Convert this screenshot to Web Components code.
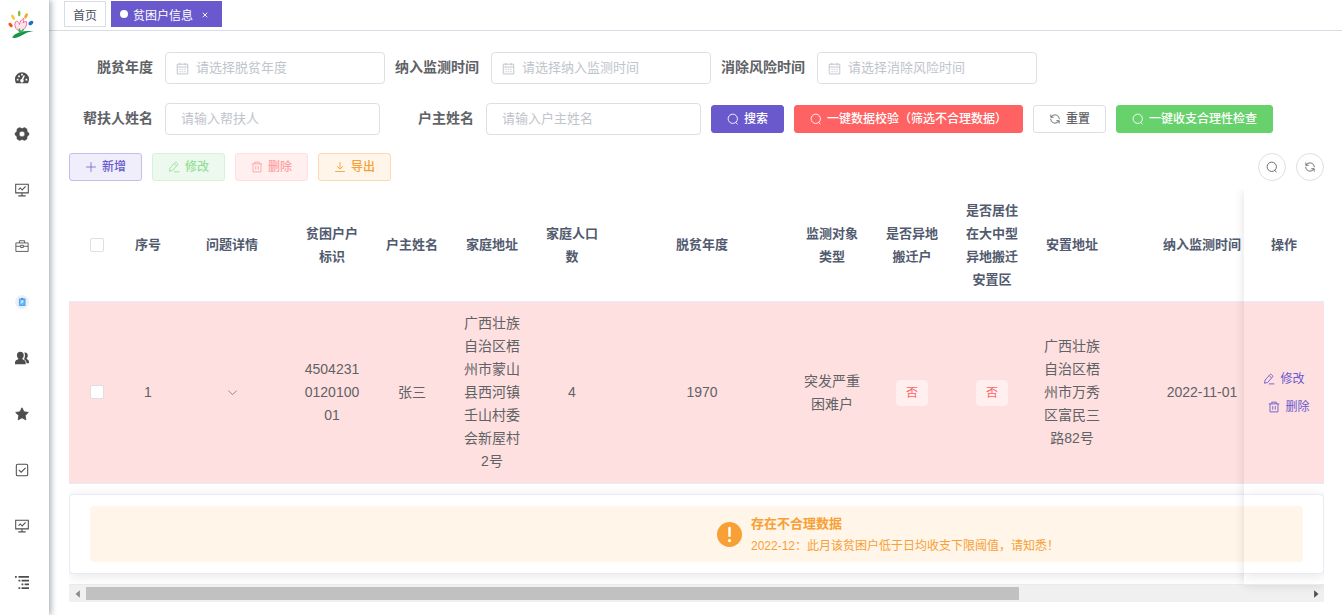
<!DOCTYPE html>
<html lang="zh-CN">
<head>
<meta charset="utf-8">
<title>贫困户信息</title>
<style>
  body {
    margin: 0;
    font-family: "Liberation Sans", "Noto Sans CJK SC", sans-serif;
    font-size: 14px;
    color: #606266;
    background: #fff;
    --primary: #6959cd;
    --danger: #ff6262;
    --success: #67d16b;
    --warning: #f8a035;
    --line: #dcdfe6;
    --line-soft: #e6ebf5;
  }
</style>
</head>
<body>
<app-page></app-page>

<script>
const ICONS = {
  search: '<circle cx="7.700" cy="7.700" r="6.200" stroke-width="1.200"/><path d="M11.600 12.600l2.400 2.200" stroke-width="1.300"/>',
  refresh: '<g stroke-width="1.200"><path d="M2.500 2v3.700h3.700M13.500 14v-3.700H9.800"/><path d="M5.300 3.200A5.700 5.700 0 0 1 13.700 8.300M10.700 12.800A5.700 5.700 0 0 1 2.300 7.700M2.800 5.500A6 6 0 0 1 5.300 3.200M13.200 10.500a6 6 0 0 1-2.500 2.300"/></g>',
  plus: '<path d="M8 1.500v13M1.500 8h13"/>',
  edit: '<path stroke-width="1.200" d="M2 13.700l.7-4.200 6.600-7.400q1-.9 2 0l1.300 1.200q.9 1 0 2L6.200 12.600 2 13.700zM7.800 14.500H15M8.300 3.600l3 2.800"/>',
  trash: '<path stroke-width="1.200" d="M1 3.800h14M5 3.600V1.500h6v2.100M2.700 4v10.500h10.600V4M6.300 6.800v4.700M9.700 6.800v4.700"/>',
  download: '<path stroke-width="1.200" d="M8 1.500v9M4.200 7L8 10.700 11.800 7M1.500 14h13"/>',
  calendar: '<path stroke-width="1.200" d="M1.500 2.700h13v12h-13zM1.500 6.200h13M4.700 1v3M11.300 1v3"/><path d="M4 9h2M7 9h2M10 9h2M4 12h2M7 12h2M10 12h2"/>',
  down: '<path stroke-width="1.300" d="M2 5.200l6 6 6-6"/>',
  dashboard: '<path fill="currentColor" stroke="none" fill-rule="evenodd" d="M8 1.500a8 8 0 0 0-8 8c0 1.700.4 3.200 1.100 4.500h13.800c.7-1.300 1.100-2.800 1.100-4.500a8 8 0 0 0-8-8zM7 3.200h2v2H7zM3.600 5h2v2h-2zM2 8.800h2v2H2zM12 8.800h2v2h-2zM9.800 4.800l1.600.6-2 4.300a2 2 0 1 1-1.800-.6z"/>',
  gear: '<path fill="currentColor" stroke="currentColor" stroke-width=".6" stroke-linejoin="round" fill-rule="evenodd" d="M5 .7l3 1.100L11 .7l2.600 1.500.3 3L16 7.100v1.800l-2.100 1.900-.3 3L11 15.300l-3-1.100-3 1.100-2.600-1.500-.3-3L0 8.900V7.100l2.100-1.900.3-3zM8 4.800a3.200 3.200 0 1 0 0 6.400 3.200 3.200 0 0 0 0-6.400z"/>',
  monitor: '<path stroke-width="1.200" d="M.8 1.500h14.400v9.800H.8zM8 11.300v3.200M3.800 14.700h8.400M4 7.500l2-1.800L8.200 8 12 3.800"/>',
  toolbox: '<path d="M1 4.500h14v9.700H1zM5 4.500V2h6v2.500M1 8.300h5.500M9.500 8.300H15M6.500 7.200h3v2.600h-3z"/>',
  user: '<circle cx="8" cy="8" r="8" fill="#eef0f8" stroke="none"/><path d="M5 4.500h6.500V12H5z" fill="#6ab8f7" stroke="#3f9ff0"/><path d="M7 3.300h2.500v1.800H7z" fill="#3f8fd8" stroke="none"/><path d="M6.500 7h3M6.500 9.500l3-2" stroke="#fff"/>',
  peoples: '<path fill="currentColor" stroke="none" d="M6 .8c2.500 0 4 1.700 4 4 0 1.700-.7 2.900-1.500 3.600v1c1.500.6 3.700 1.500 3.700 3.400V15H0v-2.200c0-1.900 2.200-2.800 3.700-3.400v-1C2.900 7.700 2.200 6.500 2.200 4.800c0-2.300 1.500-4 3.800-4z"/><path fill="currentColor" stroke="none" d="M10.700 1.800c2.300-.3 3.900 1.100 3.900 3.300 0 1.500-.6 2.600-1.200 3.200v.9c1.200.6 2.600 1.400 2.600 3.300V14h-2.800c0-2.400-1.200-3.800-2.900-4.600.8-1.300 1.800-4.900.4-7.600z"/>',
  star: '<path fill="currentColor" stroke="currentColor" stroke-linejoin="round" d="M8 .9l2.200 4.600 5 .7-3.600 3.500.8 5L8 12.300l-4.400 2.400.8-5L.8 6.200l5-.7z"/>',
  check: '<g stroke-width="1.200"><rect x="1.500" y="1.500" width="13" height="13" rx="1.500"/><path d="M4.300 7.800l2.800 2.700 5-5"/></g>',
  tree: '<g fill="currentColor" stroke="none"><path d="M0 1h2v2H0zM4 1h12v2H4zM4 5.300h2v2H4zM7.500 5.300H16v2H7.500zM7.500 9.700h2v2h-2zM11 9.700h5v2h-5zM4 14h2v2H4zM7.500 14H16v2H7.500z"/></g>',
  warn: '<circle cx="8" cy="8" r="8" fill="currentColor" stroke="none"/><path d="M8 3.800v5" stroke="#fff" stroke-width="1.600" stroke-linecap="round"/><circle cx="8" cy="11.900" r="1" fill="#fff" stroke="none"/>',
  close: '<path d="M2 2l12 12M14 2L2 14" stroke-width="2.400"/>',
  left: '<path fill="currentColor" stroke="none" d="M11 2v12L4 8z"/>',
  right: '<path fill="currentColor" stroke="none" d="M5 2v12l7-6z"/>'
};

class BaseElement extends HTMLElement {
  connectedCallback() {
    if (this.shadowRoot) return;
    this.attachShadow({ mode: 'open' }).innerHTML = this.render();
  }
  attr(name, fallback = '') { return this.getAttribute(name) ?? fallback; }
}

class UiIcon extends BaseElement {
  render() {
    return `<style>
      :host { display: inline-flex; flex: none; width: 12px; height: 12px; }
      svg { width: 100%; height: 100%; fill: none; stroke: currentColor; overflow: visible; }
    </style>
    <svg viewBox="0 0 16 16" aria-hidden="true">${ICONS[this.attr('name')]}</svg>`;
  }
}

class UiButton extends BaseElement {
  render() {
    const label = this.attr('label');
    return `<style>
      :host { display: inline-flex; --fg: #606266; --bg: #fff; --bd: var(--line); }
      :host([kind="primary"]) { --fg: #fff; --bg: var(--primary); --bd: var(--primary); }
      :host([kind="danger"]) { --fg: #fff; --bg: var(--danger); --bd: var(--danger); }
      :host([kind="success"]) { --fg: #fff; --bg: var(--success); --bd: var(--success); }
      :host([kind="primary-plain"]) { --fg: #6959cd; --bg: #f0eefa; --bd: #c3bdeb; }
      :host([kind="success-plain"]) { --fg: #95e097; --bg: #edf9ee; --bd: #d5f3d6; }
      :host([kind="danger-plain"]) { --fg: #ffa1a1; --bg: #ffefef; --bd: #ffe0e0; }
      :host([kind="warning-plain"]) { --fg: #f8a035; --bg: #fff5e8; --bd: #fcd9ae; }
      button {
        display: flex; align-items: center; gap: 5px; height: 28px; padding: 0 15px;
        border: 1px solid var(--bd); border-radius: 3px; background: var(--bg); color: var(--fg);
        font: 500 12px/16px "Liberation Sans", "Noto Sans CJK SC", sans-serif;
        white-space: nowrap; cursor: pointer;
      }
      :host([round]) button { width: 28px; padding: 0; justify-content: center; border-radius: 50%; }
      :host([kind="text"]) button { height: 28px; padding: 0; border: 0; background: none; color: var(--primary); font-weight: 400; }
    </style>
    <button type="button" ${this.hasAttribute('round') ? `aria-label="${label}"` : ''}>
      <ui-icon name="${this.attr('icon')}"></ui-icon>${this.hasAttribute('round') ? '' : `<span>${label}</span>`}
    </button>`;
  }
}

class FormField extends BaseElement {
  render() {
    const date = this.hasAttribute('date');
    return `<style>
      :host { display: flex; align-items: center; }
      label { width: 84px; padding-right: 12px; text-align: right; font-weight: 700; line-height: 30px; padding-bottom: 2px; white-space: nowrap; }
      .box { display: grid; align-items: center; width: ${date ? 220 : 215}px; }
      .box > * { grid-area: 1 / 1; }
      ui-icon { width: 13px; height: 13px; margin-left: 11px; color: #c0c4cc; }
      input {
        box-sizing: border-box; width: 100%; height: 32px; padding: 0 15px 2px; padding-left: ${date ? 30 : 15}px;
        border: 1px solid var(--line); border-radius: 4px; background: #fff; outline: none;
        font: 13px "Liberation Sans", "Noto Sans CJK SC", sans-serif; color: #606266;
      }
      input::placeholder { color: #c0c4cc; }
    </style>
    <label for="f">${this.attr('label')}</label>
    <div class="box"><input id="f" type="text" placeholder="${this.attr('placeholder')}">${date ? '<ui-icon name="calendar"></ui-icon>' : ''}</div>`;
  }
}

class UiTag extends BaseElement {
  render() {
    return `<style>
      :host { display: inline-block; height: 24px; padding: 0 9px; border: 1px solid #ffefef; border-radius: 4px;
        background: #ffefef; color: var(--danger); font-size: 12px; line-height: 24px; vertical-align: middle; }
    </style><slot></slot>`;
  }
}

class SideBar extends BaseElement {
  render() {
    const items = [['dashboard', '首页'], ['gear', '系统管理'], ['monitor', '系统监控'], ['toolbox', '系统工具'], ['user', '贫困户'],
      ['peoples', '人员'], ['star', '收藏'], ['check', '任务'], ['monitor', '统计'], ['tree', '目录']];
    return `<style>
      :host { display: block; position: relative; z-index: 2; background: #fff; box-shadow: 2px 0 6px rgba(0, 21, 41, .35); }
      .logo { display: flex; height: 50px; padding-left: 8px; align-items: center; }
      .logo svg { width: 26px; height: 30px; }
      nav { display: flex; flex-direction: column; }
      nav a { display: flex; align-items: center; height: 56px; padding-left: 15px; color: #4d4d4d; }
      nav ui-icon { width: 14px; height: 14px; }
    </style>
    <div class="logo">
      <svg viewBox="0 0 26 30" aria-hidden="true">
        <ellipse cx="11.200" cy="3.400" rx="1.300" ry="2.800" fill="#7fc241"/>
        <ellipse cx="18" cy="6" rx="1.400" ry="3" transform="rotate(28 18 6)" fill="#f5a623"/>
        <ellipse cx="5" cy="7.200" rx="1.400" ry="2.900" transform="rotate(-30 5 7.200)" fill="#f7c832"/>
        <ellipse cx="2.600" cy="15" rx="1.600" ry="2.500" transform="rotate(-40 2.600 15)" fill="#ea5a1e"/>
        <ellipse cx="22.900" cy="13" rx="1.800" ry="2.700" transform="rotate(50 22.900 13)" fill="#1f6fbf"/>
        <path d="M11 21C6 18 6 13 8.500 11c2 .5 2.500 2 3 3.500C12 11.500 13 10 15.500 8.500c.5 1.500 0 3-.5 4.500 1.500-1.500 2.500-1.500 3.500-1.300C19 16 17 19 13.500 21" fill="#fde4ec" stroke="#ee6f9c"/>
        <path d="M4 27.500c3-5.500 12-7 21.500-6.500-5 .7-8 2.200-11 3.900S7 28.900 4 27.500z" fill="#159447"/>
        <path d="M12.500 23.500c-2-1.500-2.500-3.500-1.500-5.500 1.200 1 1.700 2 2 3.500.5-1.500 1.500-2.500 3-3-.3 2.500-1.500 4-3.500 5z" fill="#2bb24c"/>
      </svg>
    </div>
    <nav>${items.map(([i, t]) => `<a href="#" aria-label="${t}"><ui-icon name="${i}"></ui-icon></a>`).join('')}</nav>`;
  }
}

class TabsBar extends BaseElement {
  render() {
    return `<style>
      :host { display: flex; gap: 5px; box-sizing: border-box; height: 31px; padding: 1px 15px 0; border-bottom: 1px solid #d8dce5; }
      a { display: flex; align-items: center; box-sizing: border-box; height: 26px; padding: 0 8px; border: 1px solid #d8dce5;
        color: #495060; font-size: 12px; text-decoration: none; white-space: nowrap; }
      a.on { border-color: var(--primary); background: var(--primary); color: #fff; }
      .dot { width: 8px; height: 8px; margin-right: 5px; border-radius: 50%; background: #fff; }
      ui-icon { width: 6px; height: 6px; margin: 2px 5px 0 9px; }
    </style>
    <a href="#">首页</a>
    <a href="#" class="on" aria-current="page"><span class="dot"></span>贫困户信息<ui-icon name="close"></ui-icon></a>`;
  }
}

class SearchForm extends BaseElement {
  render() {
    return `<style>
      :host { display: block; }
      form { display: flex; flex-wrap: wrap; align-items: center; gap: 19px 10px; }
    </style>
    <form>
      <form-field date label="脱贫年度" placeholder="请选择脱贫年度"></form-field>
      <form-field date label="纳入监测时间" placeholder="请选择纳入监测时间"></form-field>
      <form-field date label="消除风险时间" placeholder="请选择消除风险时间"></form-field>
      <form-field label="帮扶人姓名" placeholder="请输入帮扶人"></form-field>
      <form-field label="户主姓名" placeholder="请输入户主姓名"></form-field>
      <ui-button kind="primary" icon="search" label="搜索"></ui-button>
      <ui-button kind="danger" icon="search" label="一键数据校验（筛选不合理数据）"></ui-button>
      <ui-button icon="refresh" label="重置"></ui-button>
      <ui-button kind="success" icon="search" label="一键收支合理性检查"></ui-button>
    </form>`;
  }
}

class ToolBar extends BaseElement {
  render() {
    return `<style>
      :host { display: flex; gap: 10px; }
      .space { flex: 1; }
    </style>
    <ui-button kind="primary-plain" icon="plus" label="新增"></ui-button>
    <ui-button kind="success-plain" icon="edit" label="修改"></ui-button>
    <ui-button kind="danger-plain" icon="trash" label="删除"></ui-button>
    <ui-button kind="warning-plain" icon="download" label="导出"></ui-button>
    <span class="space"></span>
    <ui-button round icon="search" label="搜索"></ui-button>
    <ui-button round icon="refresh" label="刷新"></ui-button>`;
  }
}

class UiAlert extends BaseElement {
  render() {
    return `<style>
      :host { display: flex; align-items: center; justify-content: center; height: 56px; border-radius: 4px; background: #fff5e9; color: var(--warning); text-align: left; }
      ui-icon { width: 25px; height: 25px; margin-left: 2px; }
      div { padding: 2px 6px 0 9px; }
      b, p { display: block; margin: 0; font-size: 13px; line-height: 23px; }
      p { font-size: 12px; }
    </style>
    <ui-icon name="warn"></ui-icon>
    <div><b>${this.attr('heading')}</b><p><slot></slot></p></div>`;
  }
}

class ScrollBar extends BaseElement {
  render() {
    return `<style>
      :host { display: grid; grid-template-columns: 17px 1fr 17px; align-items: center; height: 17px; background: #f0f0f0; color: #505050; }
      ui-icon { width: 10px; height: 10px; justify-self: center; }
      ui-icon:first-of-type { color: #8a8a8a; }
      .thumb { width: 76.4%; height: 13px; background: #c1c1c1; }
    </style>
    <ui-icon name="left"></ui-icon><div><div class="thumb"></div></div><ui-icon name="right"></ui-icon>`;
  }
}

class DataTable extends BaseElement {
  render() {
    const widths = [55, 48, 120, 80, 80, 80, 80, 180, 80, 80, 80, 80, 180, 339, 80];
    const heads = ['序号', '问题详情', '贫困户户标识', '户主姓名', '家庭地址', '家庭人口数', '脱贫年度', '监测对象类型',
      '是否异地搬迁户', '是否居住在大中型异地搬迁安置区', '安置地址', '纳入监测时间'];
    const cells = ['1', '<button class="toggle" type="button" aria-label="展开"><ui-icon name="down"></ui-icon></button>',
      '4504231012010001', '张三', '广西壮族自治区梧州市蒙山县西河镇壬山村委会新屋村2号', '4', '1970', '突发严重困难户',
      '<ui-tag>否</ui-tag>', '<ui-tag>否</ui-tag>', '广西壮族自治区梧州市万秀区富民三路82号', '2022-11-01'];
    return `<style>
      :host { display: block; }
      .frame { position: relative; overflow-x: clip; overflow-y: visible; }
      .view { overflow: hidden; }
      table { width: 1642px; table-layout: fixed; border-collapse: separate; border-spacing: 0; text-align: center; }
      th, td { box-sizing: border-box; padding: 0 10px; border-bottom: 1px solid var(--line-soft); line-height: 23px; word-break: break-all; }
      th { height: 112px; padding-bottom: 2px; background: #fff; color: #515a6e; font-size: 13px; font-weight: 700; }
      td { height: 182px; background: #ffe0e0; font-size: 14px; }
      th.pick, td.pick { padding: 0 0 2px; }
      .fixed { position: sticky; right: 0; }
      input { appearance: none; display: block; box-sizing: border-box; width: 14px; height: 14px; margin: 0 auto;
        border: 1px solid var(--line); border-radius: 2px; background: #fff; }
      .toggle { padding: 0; border: 0; background: none; color: #808288; line-height: 12px; vertical-align: middle; }
      .toggle ui-icon { width: 11px; height: 11px; }
      ui-button + ui-button { margin-left: 10px; }
      td.fixed { padding: 0; }
      td.fixed ui-button { vertical-align: top; }
      td.more { height: 101px; padding: 0; background: #fff; }
      .stack { display: grid; height: 100px; }
      .stack > * { grid-area: 1 / 1; padding: 10px 0; }
      .card { box-sizing: border-box; height: 80px; padding: 11px 20px; border: 1px solid var(--line-soft); border-radius: 4px;
        background: #fff; box-shadow: 0 2px 12px rgba(0, 0, 0, .1); }
      .end { position: sticky; right: 0; justify-self: end; width: 80px; background: #fff; overflow: hidden; }
      .end .card { border-left: 0; border-radius: 0 4px 4px 0; padding-left: 0; }
      .end .tint { height: 56px; border-radius: 0 4px 4px 0; background: #fff5e9; }
      .shade { position: absolute; top: 0; right: 0; bottom: 0; width: 80px; box-shadow: 0 0 10px rgba(0, 0, 0, .12);
        clip-path: inset(0 0 -10px -10px); pointer-events: none; }
    </style>
    <div class="frame">
      <div class="view">
        <table>
          <colgroup>${widths.map(w => `<col style="width:${w}px">`).join('')}</colgroup>
          <thead><tr>
            <th class="pick"><input type="checkbox" aria-label="全选"></th>
            ${heads.map(h => `<th>${h}</th>`).join('')}<th></th><th class="fixed">操作</th>
          </tr></thead>
          <tbody>
            <tr>
              <td class="pick"><input type="checkbox" aria-label="选择第1行"></td>
              ${cells.map(c => `<td>${c}</td>`).join('')}<td></td>
              <td class="fixed"><ui-button kind="text" icon="edit" label="修改"></ui-button><ui-button kind="text" icon="trash" label="删除"></ui-button></td>
            </tr>
            <tr><td class="more" colspan="15"><div class="stack">
              <div><div class="card"><ui-alert heading="存在不合理数据">2022-12：此月该贫困户低于日均收支下限阈值，请知悉！</ui-alert></div></div>
              <div class="end"><div class="card"><div class="tint"></div></div></div>
            </div></td></tr>
          </tbody>
        </table>
      </div>
      <div class="shade"></div>
    </div>
    <scroll-bar></scroll-bar>`;
  }
}

class AppPage extends BaseElement {
  render() {
    return `<style>
      :host { display: grid; grid-template-columns: 49px minmax(0, 1fr); min-height: 100vh; }
      main { display: flex; flex-direction: column; padding: 21px 18px 13px 20px; }
      tool-bar { margin: 18px 0 9px; }
    </style>
    <side-bar></side-bar>
    <div>
      <tabs-bar></tabs-bar>
      <main>
        <search-form></search-form>
        <tool-bar></tool-bar>
        <data-table></data-table>
      </main>
    </div>`;
  }
}

Object.entries({
  'ui-icon': UiIcon, 'ui-button': UiButton, 'form-field': FormField, 'ui-tag': UiTag, 'side-bar': SideBar,
  'tabs-bar': TabsBar, 'search-form': SearchForm, 'tool-bar': ToolBar, 'ui-alert': UiAlert,
  'scroll-bar': ScrollBar, 'data-table': DataTable, 'app-page': AppPage
}).forEach(([name, type]) => customElements.define(name, type));
</script>
</body>
</html>
